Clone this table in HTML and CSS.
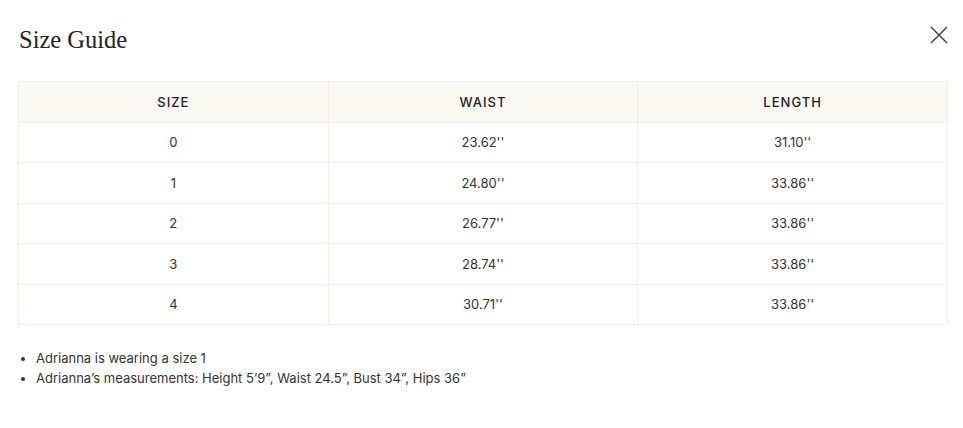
FILE: index.html
```html
<!DOCTYPE html>
<html>
<head>
<meta charset="utf-8">
<link rel="stylesheet" href="styles.css">
</head>
<body>
<div class="modal">
  <div class="head">
    <h2 class="title">Size Guide</h2>
    <button class="close" aria-label="Close">
      <svg width="18" height="18" viewBox="0 0 18 18"><path d="M1 1L17 17M17 1L1 17" stroke="#333" stroke-width="1.3" fill="none"/></svg>
    </button>
  </div>
  <table class="sizes">
    <thead>
      <tr><th>Size</th><th>Waist</th><th>Length</th></tr>
    </thead>
    <tbody>
      <tr><td>0</td><td>23.62''</td><td>31.10''</td></tr>
      <tr><td>1</td><td>24.80''</td><td>33.86''</td></tr>
      <tr><td>2</td><td>26.77''</td><td>33.86''</td></tr>
      <tr><td>3</td><td>28.74''</td><td>33.86''</td></tr>
      <tr><td>4</td><td>30.71''</td><td>33.86''</td></tr>
    </tbody>
  </table>
  <ul class="notes">
    <li>Adrianna is wearing a size 1</li>
    <li>Adrianna’s measurements: Height 5’9”, Waist 24.5”, Bust 34”, Hips 36”</li>
  </ul>
</div>
</body>
</html>
```
FILE: styles.css
```css
html, body { margin: 0; padding: 0; background: #fff; }
body { font-family: "Inter", "Liberation Sans", sans-serif; color: #333; }
.modal { padding: 24px 15px 0 18px; }
.head { display: flex; justify-content: space-between; align-items: flex-start; height: 57px; }
.title { margin: 0 0 0 1px; font-family: "Liberation Serif", serif; font-weight: 400; font-size: 24.5px; line-height: 32px; color: #222; }
.close { background: none; border: 0; padding: 0; margin: 2px 0 0 0; width: 18px; height: 18px; cursor: pointer; }
.close svg { display: block; }
.sizes { width: 930px; border-collapse: collapse; table-layout: fixed; font-size: 13px; }
.sizes th, .sizes td { border: 1px solid #f1eee3; text-align: center; height: 39.5px; padding: 0; }
.sizes th { background: #f9f8f3; font-weight: 500; text-transform: uppercase; letter-spacing: 0.08em; color: #222; }
.sizes td { color: #333; }
.notes { margin: 23px 0 0 0; padding-left: 18px; font-size: 13px; line-height: 20px; color: #333; }
```
